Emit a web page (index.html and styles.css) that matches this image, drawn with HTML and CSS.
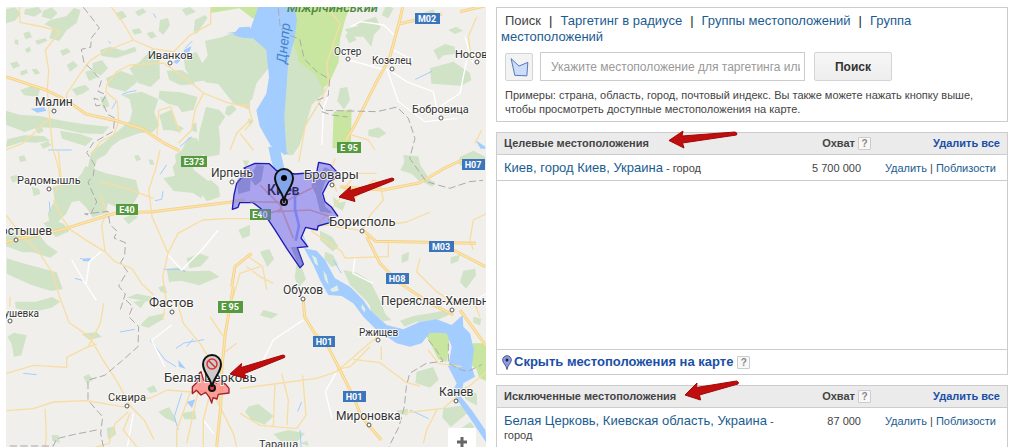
FILE: index.html
```html
<!DOCTYPE html>
<html lang="ru">
<head>
<meta charset="utf-8">
<title>Местоположения</title>
<link rel="stylesheet" href="styles.css">
</head>
<body>
<main class="layout">
<section class="map" aria-label="Карта">
<svg class="map__canvas" viewBox="6 7 480 440" preserveAspectRatio="xMinYMin slice">
<g transform="scale(.33333)">
<!-- woods -->
<g class="wood">
<path d="M18 28L45 22 62 40 45 62 18 70ZM75 28l40-7 12 14-25 15-30-8ZM130 32l25-10 18 18-20 18-28-8ZM150 60l50-12 22-25 20 8-12 38-30 22-22 32-30-8 10-30-25-12ZM70 100l18-6 8 18-20 6ZM45 118l10 2v16l-12-6ZM105 122l30-8 8 8-30 12ZM75 148l14-8 4 12-12 8ZM180 152l22-8 10 12-24 12ZM200 195l20-12 14 14-24 18ZM278 190l28-10 18 25-22 22-25-14ZM255 215l24-6 14 22-26 12ZM235 262l20-8 14 14-26 16ZM95 208l14-2 12 14-16 4ZM60 215l20-8 4 12-20 8ZM30 190l22-6 8 14-20 8ZM345 40l22-8 14 18-22 10ZM395 90l22-6 10 14-24 6ZM480 60l24-6 6 22-20 28-14-10ZM545 28l25-7 18 14-30 12ZM585 60l30-15 8 8-34 50-8-10ZM440 100l18-6 12 16-18 6ZM405 35l24-10 10 12-24 12ZM300 150l30-10 40 12 35-12 5 14-60 20-45-6Z"/>
<path d="M615 122l50-10 40-16 45 4v230l-50-20-45-58-40-5-12-52 20-28ZM550 170l40-14 25 50 5 35-40 5-24-38ZM388 205l30-18 40-42 20 30 2 60-28 26-38-12ZM318 235l45-22 40 14 8 20-35 28-50-14ZM500 212l45-2 30 20 10 22-42 4-35-16ZM478 272l65 5 50 14-12 38-35 8-12-18-30-8-28-16ZM365 285l60-10 50 22-12 40 14 40-20 20-38 2-60 22-24 18-16 24-28 16-10 32-20 6 12-60 40-30 36-30 40-34 8-30-8-35ZM618 320l40 10 18 20-20 30 5 50-3 34-40 8-24-32 4-44ZM680 320l16-6 14 14-22 20-14-6ZM575 375l14-8 2 30-14-4ZM478 345l36-16 14 44 24 12-14 12-24-6-24 0Z"/>
<path d="M18 332l40 12 60 4 70 14 60 10 80 8-20 22-64-2-70-16-60-2-40 14-56-22ZM60 270l35-12 26 8-8 24-40-4ZM22 418l50-12 60 2 18 14-44 6-40-2-48 16ZM180 392l60 10 40 14-24 22-70-22ZM215 268l28-10 8 18-20 12ZM180 300l22-8 2 18-20 2ZM105 385l20-6 6 14-16 8ZM300 290l20 2 8 26-18 8ZM120 432l24-8 10 12-24 10ZM55 470l18-4 6 16-18 4Z"/>
<path d="M720 95l70 14 20 30 0 60-40 50-14 50-36 20ZM745 355l16 8-14 14ZM885 110l30 15 20 60 30 50 10 40-40 40-20 70-16 50-20 30-30 0-6-40 4-60-8-40 20-60-8-80 20-50ZM1068 70l60-20 14 34-20 20-8 36-24-30-38 0-18-22 40-10ZM1145 45l14-30 22 10-16 30ZM1050 90l20 30-22 10-12-22ZM1300 150l36-18 28 8 2 22-36 4-14 14ZM1290 205l70-20 50 34 4 22-30 16-90-6ZM1260 42l40-14 8 16-30 16ZM1345 90l24-10 20 12-24 10ZM1020 265l22-4 8 40-18 28-20-26ZM1105 390l32-8 22 18-22 14-32-6Z"/>
<path d="M158 560l60-10 28-30 10-22 62 22 90 20 10 40-20 35-50 6-24-11-8 30-38 12-20-30-20-20-22 4-20 40-28-6-4-40ZM95 560l22 6 4 16-20 6ZM30 530l22-6 6 14-20 10ZM525 465l20-14 20-40 25 4 22 44-14 20-20 22 8 20-60 12-8-32 10-14ZM490 535l34-8 58-16 46 34-25 50-24-16-58-6ZM590 560l42-20 24 20 4 30-40 14ZM165 600l30-8 4 48-28 30-22 0-6-30ZM130 670l26-12 36 14 16 22-40 18ZM18 695l38-6 62 16 22 28 34 24-24 16-52-16-30 0-50-18ZM20 775l60 18 90 24 18 50-34 6-60-18-74-34ZM370 655l26-12 18 8-28 22ZM560 775l40-14 28 10-26 28-34 6ZM500 808l30-6 35 12 65-2 28 18-60 26-55-14-36 4ZM715 690l35-16v32l-22 10ZM475 862l20-6 6 24-18-4ZM380 893l30-12 60 12-20 12ZM402 468l12-4 10 14-14 6ZM445 478l14 2 4 14-12 0Z"/>
<path d="M728 480l20 2-10 22ZM1210 465l45 4 6 26 22 34-20 20-26-26-36-12 12-24ZM1380 470l40-18 36 18v26l-50 14-30-18ZM1235 490l20 34 50 22-8 14-44-22-24-22ZM1000 590l20 18 18-4-10 28-26-14ZM960 692l36 18 20 30-18 14-38-34ZM975 755l24 10 16 30-20 6-22-24ZM1030 810l40 8 40 24 30 60 20 50-30-4-30-44-50-50ZM1110 915l40 20 24 26-26 2-36-30ZM1352 772l28-8-6 20-22 8ZM1205 765l22-10-2 26-20 8ZM890 790l16 15 12 32-22 26-12-30ZM780 755l28-8 14 30-20 24ZM1390 812l36-6 2 20-30 40-18-20Z"/>
<path d="M22 1010l20-12 38 8-16 60-22 4-8-40ZM45 905l62 0 50-14 24 14-26 18-60 14-48-12ZM245 1002l44-6 16 14-36 10ZM445 950l50-10-6 18-44 26-24-8ZM475 1235l32-14 18 30 4 18-34-16ZM440 1165l22-10 10 20-22 4ZM250 1130l16-8 14 18-20 10ZM320 1285l24-6 4 24-24 16ZM545 1240l40-8 4 26-36 0ZM400 905l40-6-18 26ZM155 1305l20 0 4 24-22-6Z"/>
<path d="M745 1220l30-8 46 36-28 26-38-14-20-24ZM820 1302l45-12 50 10-24 26-48-2ZM900 1330l22-8 4 16ZM1200 962l40-14 60-10 30-6 18 12-30 14-70 8-34 14ZM1420 950l24 6-4 20-20-8ZM1250 1115l50-14 16 38-26 24-44-14ZM1190 1232l34-6-2 20-28-4ZM1330 1225l65-10 10 22-52 44-26-28ZM1395 1158l36 24 0 35-36-20ZM790 930l45 12-20 14-35-10ZM1375 1290l36-24 12 14-22 30Z"/>
</g>
<!-- parks -->
<path class="park" d="M632 21h150l-8 40-16-6-40-30-86 14ZM880 21h170l-14 36-16 60-4 70-28 60-20 20-20-40-50-40-24-80-40-20-10-30ZM1001 335l54-7-3 117h-55ZM1275 1000l60-14 14 20-6 60-4 20-24-8-20-40ZM1418 1030h42v114l-22-10-10-30-20-10Z"/>
<!-- water -->
<path class="water" d="M775 21h108l8 40-8 60-18 60-6 90-6 80 6 100 4 10-10 2-40-24-34-60-10-48 30-50 8-50-8-80-14-14-26-22-32-2-27-8 10-12 42-8ZM676 100l30-4 12-14 32-2v24l-22 2-12-6ZM805 440l34 4 14 60-6 14-24-8-10-30ZM912 745L950 752 975 780 1005 835 1050 860 1090 900 1110 930 1160 975 1210 988 1260 965 1310 958 1355 975 1388 945 1390 980 1410 1000 1422 1050 1415 1100 1425 1130 1390 1150 1383 1190 1415 1230 1456 1290 1460 1330 1440 1300 1400 1240 1368 1195 1360 1170 1370 1150 1345 1100 1355 1040 1340 1000 1290 998 1265 1030 1230 1040 1190 1030 1130 990 1090 950 1060 910 1025 888 985 885 960 840 940 795ZM92 326l40-4 8 10-28 6ZM520 186l30-24 2-12 22-12-4 14-40 40ZM1426 420l30 20v6h-14ZM247 776l25-2-2 10-20 0ZM535 1080l22 26-20-6ZM560 1206l26-8-10 26Z"/>
<path class="isle" d="M935 765l14 8 6 24-10-6ZM970 812l10 14 6 30-12-18ZM990 868l22-12 4 16-20 4ZM1086 912l10 14-2 12-10-14Z"/>
<g class="stream">
<path d="M365 284l20-8 24-4M350 302l-14 24M575 410l-35 30M555 145l22-22M325 124l8 6M460 40l8 14M145 450l70 0M500 494l-20 30M465 602l20-4 4-24M240 775l20 6M225 835l22 6M490 808l50 0 16 8M528 1045l24-16 60-10M360 996l44-8M70 1120l40 4M920 735l-12-30M1000 780l24 40M560 1040l20-24M450 1020l46 60 32 20M545 1180l-22 70 12 40M905 1205l-12 30M900 1290l4 60M1230 1230l56 26M1246 238l50-24M950 320l-24 40M148 605l2 28"/>
</g>
<!-- minor roads -->
<g class="minor">
<path d="M945 510l45-20M990 270l-20 55-4 110M1052 80l30-15 70 10 30 30M1046 180l110 30M1160 205l35 100 80 60 100-10M1160 205l60 40 80 30 14 70M1180 150l60 30M1400 180l-20 100-60 40M1395 110l24 80M258 855l10-70 35-30M215 780l44 75 30 46M500 760l45 50 60-60 50-60M515 975l-60 46 40 80M790 1080l30-60 90-60M1010 1115l-34 60 20 80M1010 1115l28-10M1065 770l-6 50 60 30M400 1240l-18 100M610 1260l30 40M1460 880l-34 20"/>
</g>
<!-- roads -->
<g class="road">
<path d="M58 21l2 46 70 14 50 14-44 55 10 60-4 60 10 115 6 60 18 60 6 60M334 21l34 45 32 54 60 26 60 10 50-50 62-35V21M400 120l-90 36-40 26-30 40-40 60 0 20M320 255l30-40 40-20 100-6 60 40 60 50 70 28 60 14M610 280l-25 50-10 60-40 40M540 400l-28-80-36 12-5 75M320 255l-2 20 34 30 4 60-15 40-40 20-25 36M18 450l50-20 40-36 40-40M18 645l50 64 50 50 40 60 20 70 30 80 60 40 40 70 40 60 44 80 40 40 30 60M160 600l30 60 20 25M175 450l8 80-18 50M205 685l60 40 50 30 30 30 50 20 30 46 36 34M315 755l-10-80 15-40-20-50M480 450l-14 60-20 60 10 80 48 110-16 70 10 70-10 60M504 760l30-60 74-40 70-4 70 0M300 545l80 20 80 30M20 1120l80-24 100 6 0-30 60-30 30-10M20 1232l80-6 60-20 100-4 120 20M265 1040l36-70 10-60M382 1200l70-6 50-24 70 6 80-4M385 1235l-40 36-18 60-40 10M390 1240l-20 50 40 50M530 900l20 70 50 60 36 60M630 950l40 60M570 1180l-40 110 0 60M600 1150l-40 180M640 1140l-30 120 0 80M640 1180l60 120 10 40M720 1165l80-10 150-20 60-20 80-70 60-50M1060 1078l80 10 80 60 40 10M1010 1110l40-10 60-60M1144 1040l0 40M135 1226l4 80-4 40M30 890l0 30M720 1240l60 36 110 10 28-40-10-120M825 1150l-5 130M845 1120l20 80-4 76M1460 1115l-60 50-70 60-120 14M1310 1230l-30 60-10 40M1385 1100l-70-10-30-40"/>
<path d="M980 21l40 50-20 60-20 60 6 60-30 60-40 66-20 110M1055 405l50 15 20 30M720 315l24 0 14 50-24 26M720 400l40 50M690 450l20-50 40-40M740 800l40 30 40 20M1030 570l40-50 60 0M1025 590l-40 50-30 30M1060 600l60-60 20 10 10 50-40 46-20 40M1460 640l-40 20-10 60 10 30M1075 690l-110-16-30 20 90 60 10 20 130-4 0-40M1110 680l110-14 70-30M1260 775l-10 40 60 60 60 40M1430 50l-25 60 10 70M1425 430l20-40M800 870l-12-70-50-35M780 800l-60 20-20 70M670 1060l40-30M1420 900l20 50M1010 575l-20-60 16-40"/>
</g>
<!-- highways -->
<g class="highway-edge"><path d="M18 230l120 40 60 30 60 42 90 20 80 25 60 40 50 25M1208 21l-10 45-30 110-44 80-60 120-26 44M1196 72l130-30M1380 35l76-18M18 725l160-34 170-52 110-4 230-28 46-8M1020 560l130 10 110-22 70-42 56-26M1088 690l40 34 300 6M1100 710l40 80 60 60 90 60 70 35M1360 750l96 50M1380 930l80 110M910 900l4 50 30 50 40 40 36 70 40 80 24 60 60 70M700 860l-10 60-14 80-10 100-4 120-12 120M695 860l10-60 50-40"/></g>
<g class="highway"><path d="M18 230l120 40 60 30 60 42 90 20 80 25 60 40 50 25M1208 21l-10 45-30 110-44 80-60 120-26 44M1196 72l130-30M1380 35l76-18M18 725l160-34 170-52 110-4 230-28 46-8M1020 560l130 10 110-22 70-42 56-26M1088 690l40 34 300 6M1100 710l40 80 60 60 90 60 70 35M1360 750l96 50M1380 930l80 110M910 900l4 50 30 50 40 40 36 70 40 80 24 60 60 70M700 860l-10 60-14 80-10 100-4 120-12 120M695 860l10-60 50-40"/></g>
<!-- region borders -->
<path class="border" d="M250 22l18 22 30 40-24 30-2 28-28 6 8 40 22 20 30 34-10 32 24 10-10 20-26-10 6 24 22-4 14 30 20 10-4 40-60 34-20 30 24 36-4 32-16 20 26 60-20 40-16-4 70-8 6 40 22 20-10 20 34 14-2 40-12 20 20 26-26 44 20 24-16 50M378 900l20 20-12 30 30 30-2 60-50 44-50 42-50 14 0 60 20 24 24 26-6 50 8 40M290 1290l-70 14-50 12-10 22h-140M835 25l6 60 24 20 34 12 14 60 40 40 36 20-4 50-34 14 20 30 160 4 60-14 34 34 20 60-16 60 50 70 70 20 60-20 40-4M1285 1020l24 30 20 34-50 6-50 30-10 40-6 60-16 60-30 60M1345 1030l0 60 40 20 20 4 40-20M965 335l30 10 48 6"/>
<!-- targeted area -->
<g transform="translate(720 450)"><path class="area area--target" d="M-23 178L-18 135-10 100 12 74 30 70 12 54 45 40 88 41 110 62 165 72 230 67 236 37 270 44 290 65 290 82 266 96 248 130 255 155 275 172 293 198 268 208 270 218 234 228 232 240 197 232 183 264 203 290 172 293 190 343 180 353 142 298 104 238 82 205 64 177 39 158-1 158-6 172Z"/>
<path class="area-detail" d="M12 60l20 28-2 34-35 10-4-40ZM50 45l22 2-8 46-18 14-18-24ZM255 52l35 18-34 24-12 36 12 40 22 20-38-5-12-50-14-30ZM152 292l20-2 18 52-10 12Z"/>
<path class="area-road" d="M30 155l100 2 100-50M60 105l60 60 40 100M110 185l100-5 60 20M150 80l-30 100-35 10"/>
<path class="area-water" d="M135 105l30 22 0 50 12 50-10 45"/></g>
<!-- excluded area -->
<path class="area area--exclude" d="M598 1120l5-5 8 26 20-2 18 10 8-10 20 14 10 12 0 14-32 4-4 14-12-4-4 16-6-16-12-16-14 8-14-14-12 10 0-20 14-14Z"/>
</g>

<g class="dot"><circle cx="54" cy="111" r="2"/><circle cx="170" cy="63" r="2"/><circle cx="348" cy="59" r="2"/><circle cx="392" cy="69" r="2"/><circle cx="477" cy="62" r="2"/><circle cx="441" cy="118" r="2"/><circle cx="49" cy="189" r="2"/><circle cx="16" cy="240" r="2"/><circle cx="232" cy="182" r="2"/><circle cx="332" cy="185" r="2"/><circle cx="362" cy="231" r="2"/><circle cx="303" cy="299" r="2"/><circle cx="452" cy="310" r="2"/><circle cx="172" cy="312" r="2"/><circle cx="10" cy="321" r="2"/><circle cx="127" cy="406" r="2"/><circle cx="378" cy="340" r="2"/><circle cx="369" cy="425" r="2"/><circle cx="456" cy="401" r="2"/></g>

<g class="town">
<text class="t12" x="35" y="106">Малин</text><text class="t11" x="148" y="59">Иванков</text><text class="t10" x="334" y="55">Остер</text><text class="t10" x="372" y="64">Козелец</text><text class="t11" x="455" y="58">Носовка</text><text class="t11" x="412" y="113">Бобровица</text><text class="t11" x="17" y="184">Радомышль</text><text class="t12 end" x="52" y="235">Коростышев</text><text class="t12" x="211" y="177">Ирпень</text><text class="t13" x="304" y="179">Бровары</text><text class="t13" x="329" y="226">Борисполь</text><text class="t12" x="283" y="294">Обухов</text><text class="t12" x="381" y="305">Переяслав-Хмельницкий</text><text class="t13" x="149" y="307">Фастов</text><text class="t10 end" x="39" y="317">Андрушевка</text><text class="t13" x="164" y="382">Белая Церковь</text><text class="t11" x="108" y="401">Сквира</text><text class="t10" x="359" y="336">Ржищев</text><text class="t12" x="336" y="420">Мироновка</text><text class="t12" x="439" y="396">Канев</text><text class="t11" x="259" y="448">Тараща</text><text class="t14 capital" x="267" y="195">Киев</text>
</g>
<text class="reserve" x="287" y="12">Міжрічинський</text>
<text class="river" transform="translate(286 64) rotate(-84)">Днепр</text>

<g class="shield shield--blue"><rect x="415" y="13" width="25" height="11"/><text x="427" y="22">M02</text><rect x="462" y="159" width="23" height="11"/><text x="473" y="168">H07</text><rect x="429" y="241" width="25" height="11"/><text x="441" y="250">M03</text><rect x="386" y="273" width="23" height="11"/><text x="397" y="282">H08</text><rect x="313" y="336" width="22" height="11"/><text x="324" y="345">H01</text><rect x="343" y="391" width="23" height="11"/><text x="354" y="400">H01</text></g>
<g class="shield shield--green"><rect x="337" y="142" width="24" height="11"/><text x="349" y="151">E 95</text><rect x="181" y="156" width="26" height="11"/><text x="194" y="165">E373</text><rect x="116" y="204" width="22" height="11"/><text x="127" y="213">E40</text><rect x="250" y="209" width="21" height="11"/><text x="260" y="218">E40</text><rect x="218" y="301" width="25" height="12"/><text x="230" y="310">E 95</text></g>
<path class="veil" d="M257 209h14v11h-6Z"/>

<!-- pins -->
<circle class="spot" cx="284" cy="202" r="3"/>
<path class="pin pin--blue" d="M284 201C283 192 275 187 275 178a9 9 0 0 1 18 0C293 187 285 192 284 201Z"/><circle cx="284" cy="178" r="3"/><circle cx="284" cy="202" r="1"/>
<circle class="spot spot--red" cx="212" cy="388" r="3"/>
<path class="pin pin--gray" d="M212 387C211 378 203 373 203 364a9 9 0 0 1 18 0C221 373 213 378 212 387Z"/><g class="ban"><circle cx="212" cy="364" r="5"/><path d="M208.500 360.500l7 7"/></g>

<g class="arrow"><path d="M339 197L350.500 186.500 350 190.500 392 178q3 .5 1.500 2.500L353.500 196.500 355 201.500Z"/><path d="M230 374L241.500 363.500 241 367.500 283 355q3 .5 1.500 2.500L244.500 373.500 246 378.500Z"/></g>
</svg>
<button class="map__zoom" type="button" aria-label="Увеличить"><svg viewBox="0 0 12 12"><path d="M6 1v10M1 6h10"/></svg></button>
</section>

<div class="side">
<section class="panel search">
<nav class="tabs"><span class="tabs__current">Поиск</span><span class="tabs__bar">|</span><a href="#radius">Таргетинг в радиусе</a><span class="tabs__bar">|</span><a href="#groups">Группы местоположений</a><span class="tabs__bar">|</span><a href="#bulk">Группа местоположений</a></nav>
<form class="search__form">
<button class="shape" type="button" aria-label="Нарисовать область"><svg viewBox="0 0 28 28"><path d="M5.500 5L14 13 23.500 9 22.500 23.500 9.500 23Z"/></svg></button>
<input class="search__input" type="text" aria-label="Местоположение" placeholder="Укажите местоположение для таргетинга или">
<button class="search__submit" type="submit">Поиск</button>
</form>
<p class="search__hint">Примеры: страна, область, город, почтовый индекс. Вы также можете нажать кнопку выше, чтобы просмотреть доступные местоположения на карте.</p>
</section>

<section class="panel">
<div class="panel__list">
<table class="places">
<thead><tr><th class="places__name" scope="col">Целевые местоположения</th><th class="places__reach" scope="col">Охват <button class="help" type="button">?</button></th><th class="places__actions" scope="col"><a href="#clear">Удалить все</a></th></tr></thead>
<tbody><tr><td class="places__name"><a href="#kiev">Киев, город Киев, Украина</a> <small>- город</small></td><td class="places__reach">5 700 000</td><td class="places__actions"><a href="#remove">Удалить</a> <span>|</span> <a href="#near">Поблизости</a></td></tr></tbody>
</table>
</div>
<div class="panel__foot"><svg class="foot-pin" viewBox="0 0 10 15"><path d="M5 14.500C4.500 10 .7 8.500.7 5a4.300 4.300 0 0 1 8.600 0C9.300 8.500 5.500 10 5 14.500Z"/><circle cx="5" cy="5" r="1.500"/></svg><a href="#hide">Скрыть местоположения на карте</a><button class="help" type="button">?</button></div>
<svg class="pointer pointer--target" viewBox="0 0 70 20"><path d="M0 9.500L14 0 13 5 66 1q3 1 1.500 3L13.500 12 15 17Z"/></svg>
</section>

<section class="panel">
<table class="places">
<thead><tr><th class="places__name" scope="col">Исключенные местоположения</th><th class="places__reach" scope="col">Охват <button class="help" type="button">?</button></th><th class="places__actions" scope="col"><a href="#clear-excluded">Удалить все</a></th></tr></thead>
<tbody><tr><td class="places__name"><a href="#bila">Белая Церковь, Киевская область, Украина</a> <small>- город</small></td><td class="places__reach">87 000</td><td class="places__actions"><a href="#remove-excluded">Удалить</a> <span>|</span> <a href="#near-excluded">Поблизости</a></td></tr></tbody>
</table>
<svg class="pointer pointer--exclude" viewBox="0 0 54 20"><path d="M0 14L12 2 11.500 6.500 51.500 0q3 1 1.500 3L14.500 14 15.500 19Z"/></svg>
</section>
</div>
</main>
</body>
</html>
```
FILE: styles.css
```css
* { box-sizing: border-box; }
body {
  margin: 0;
  background: #fff;
  color: #444;
  font: 11px/14px "Liberation Sans", Arial, sans-serif;
  overflow: hidden;
}
a { color: #1a5c91; text-decoration: none; }
button, input { font: inherit; }

.layout {
  display: grid;
  grid-template-columns: 480fr 512fr;
  gap: 10px;
  min-height: 100vh;
  padding: 7px 8px 0 6px;
}

.map { position: relative; overflow: hidden; height: calc(100vh - 7px); background: #f1efec; }
.map__canvas { display: block; width: 100%; height: 100%; }
.map__zoom {
  position: absolute;
  right: 10px;
  bottom: -9px;
  width: 28px;
  height: 28px;
  padding: 0;
  border: 0;
  border-radius: 2px;
  background: #fff;
}
.map__zoom svg { display: block; width: 12px; height: 12px; margin: -1px auto 0; }
.map__zoom path { stroke: #666; stroke-width: 3; }

.wood { fill: #d0e3c7; }
.park { fill: #c8e6a0; }
.water { fill: #a3ccff; }
.isle { fill: #e2eee0; }
.stream path { fill: none; stroke: #a3ccff; stroke-width: 3; }
.minor path { fill: none; stroke: #fff; stroke-width: 4; }
.road path { fill: none; stroke: #f7dda2; stroke-width: 4; stroke-linejoin: round; }
.highway-edge path { fill: none; stroke: #f3d08a; stroke-width: 9; stroke-linejoin: round; }
.highway path { fill: none; stroke: #fde5a8; stroke-width: 4; stroke-linejoin: round; }
.border { fill: none; stroke: #aaa; stroke-width: 3; stroke-dasharray: 22 10; }
.area { stroke-width: 4; stroke-linejoin: round; }
.area--target { fill: #6f66f0; fill-opacity: .55; stroke: #1c1cb8; }
.area--exclude { fill: #ff6b6b; fill-opacity: .6; stroke: #a3202c; }
.area-detail { fill: #5f66b8; fill-opacity: .45; }
.area-road { fill: none; stroke: #a987bd; stroke-width: 5; }
.area-water { fill: none; stroke: #7c83ee; stroke-width: 8; }
.dot { fill: #fff; stroke: #555; }
.town { fill: #333; font-family: Roboto, sans-serif; stroke: #fff; stroke-opacity: .8; stroke-width: 2px; paint-order: stroke; }
.t10 { font-size: 10px; }
.t11 { font-size: 11px; }
.t12 { font-size: 12px; }
.t13 { font-size: 13px; }
.t14 { font-size: 14px; }
.end { text-anchor: end; }
.capital { fill: #2b2b62; stroke: none; font-weight: 500; }
.reserve { fill: #4c8a3f; font: italic 500 13px Roboto, sans-serif; }
.river { fill: #4285cf; font: italic 14px Roboto, sans-serif; }
.shield text { fill: #fff; font: bold 9px Roboto, sans-serif; text-anchor: middle; }
.shield--blue { fill: #3b76bd; }
.shield--green { fill: #569a40; }
.veil { fill: #6f66f0; fill-opacity: .45; }
.pin { stroke: #111; stroke-width: 2; }
.pin--blue { fill: #83a5ea; }
.pin--gray { fill: #ccc; }
.spot { fill: none; stroke: #111; stroke-width: 2; }
.spot--red { fill: #d44; }
.ban { fill: none; stroke: #e03030; stroke-width: 1.500; }
.arrow path, .pointer path { fill: #c00d0d; stroke: #a00808; stroke-linejoin: round; }

.side { display: flex; flex-direction: column; gap: 10px; min-width: 0; }
.panel { position: relative; border: 1px solid #ccc; }
.panel:last-child { flex: 1; }

.search { padding: 5px 8px 5px 4px; }
.tabs { font-size: 13px; line-height: 16px; }
.tabs__current { padding-left: 4px; }
.tabs__bar { margin: 0 8px; color: #222; }
.search__form { display: flex; align-items: center; gap: 7px; padding: 7px 0 7px 4px; }
.shape { width: 28px; height: 28px; padding: 0; border: 1px solid #d4d4d4; border-radius: 2px; background: #f3f3f3; }
.shape svg { display: block; width: 100%; }
.shape path { fill: #cddcf8; stroke: #4a6fb5; }
.search__input { width: 265px; height: 29px; padding: 0 4px 0 10px; border: 1px solid #ccc; font-size: 12px; color: #444; }
.search__input::placeholder { color: #999; opacity: 1; }
.search__submit {
  width: 78px;
  height: 29px;
  margin-left: 2px;
  border: 1px solid #d4d4d4;
  border-radius: 2px;
  background: linear-gradient(#f6f6f6, #eee);
  color: #333;
  font-size: 12px;
  font-weight: bold;
}
.search__hint { margin: 0 0 0 4px; }

.panel__list { height: 217px; border-bottom: 1px solid #ccc; }
.places { width: 100%; border-collapse: collapse; table-layout: fixed; }
.places th, .places td { padding: 0; border-bottom: 1px solid #ccc; vertical-align: top; font-size: 11px; }
.places th { height: 21px; background: #ebebeb; vertical-align: middle; }
.places td { height: 26px; padding-top: 6px; padding-bottom: 5px; }
.places .places__name { padding-left: 7px; text-align: left; }
td.places__name a { font-size: 13px; }
.places small { font-size: 11px; }
.places__reach { width: 76px; text-align: right; }
th.places__reach { white-space: nowrap; }
.places td.places__reach { padding-right: 10px; }
.places__actions { width: 136px; text-align: right; }
.places th.places__actions { padding-right: 7px; }
.places td.places__actions { padding-right: 11px; }
th.places__actions a { color: #1a4fa5; }
.help {
  width: 13px;
  height: 13px;
  padding: 0;
  border: 1px solid #ccc;
  border-radius: 1px;
  background: #f8f8f8;
  color: #888;
  font-size: 10px;
  line-height: 11px;
}
.panel__foot { display: flex; align-items: center; gap: 2px; padding: 4px 5px 4px; font-size: 13px; line-height: 16px; font-weight: bold; }
.panel__foot a { color: #1a4fa5; }
.panel__foot .help { margin-left: 2px; }
.foot-pin { width: 10px; height: 15px; }
.foot-pin path { fill: #8d9be0; stroke: #4a5590; }
.foot-pin circle { fill: #223; }
.pointer { position: absolute; overflow: visible; }
.pointer--target { left: 172px; top: -2px; width: 70px; height: 20px; }
.pointer--exclude { left: 188px; top: -5px; width: 54px; height: 20px; }
```
